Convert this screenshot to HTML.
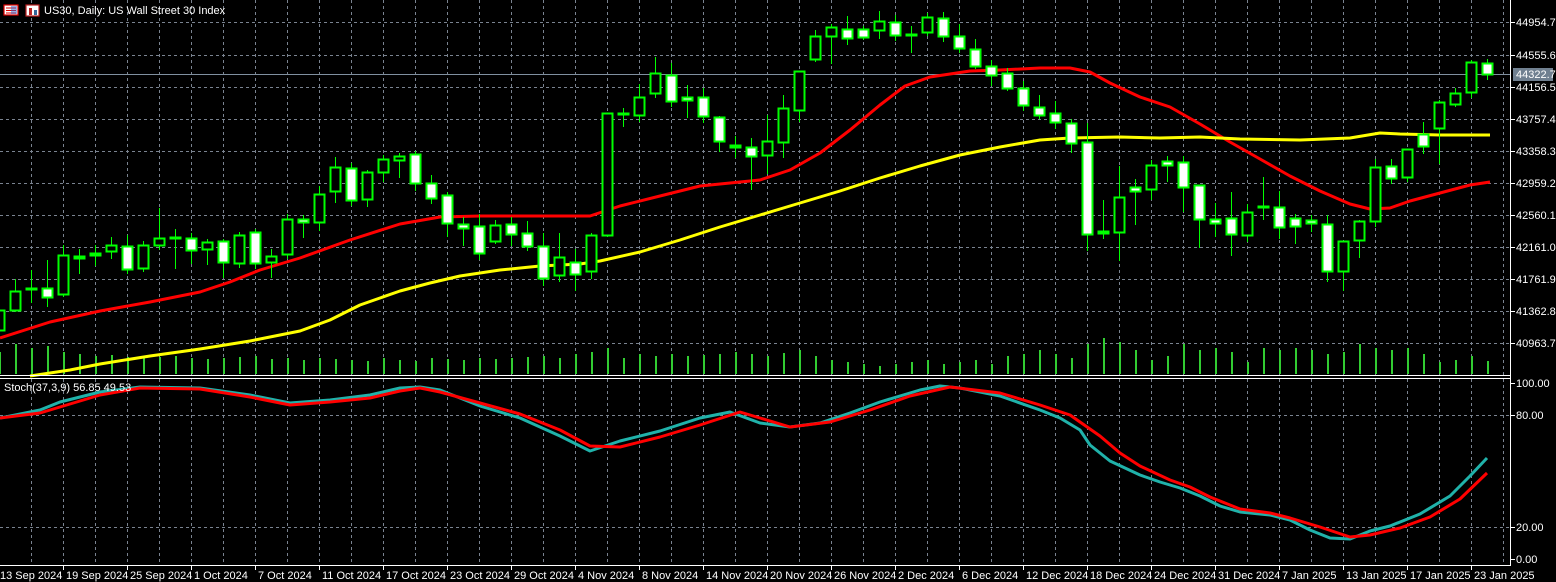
<!DOCTYPE html>
<html><head><meta charset="utf-8"><style>
html,body{margin:0;padding:0;background:#000;width:1556px;height:582px;overflow:hidden}
svg{display:block}
text{font-family:"Liberation Sans",sans-serif;font-size:11px;fill:#fff}
</style></head><body>
<svg id="s" width="1556" height="582" xmlns="http://www.w3.org/2000/svg">
<rect width="1556" height="582" fill="#000"/>
<g id="grid"></g>
<g id="vol"></g>
<g id="ma"></g>
<g id="cd"></g>
<g id="st"></g>
<g id="ax"></g>
<text x="44" y="14">US30, Daily:  US Wall Street 30 Index</text>
<text x="4" y="391">Stoch(37,3,9) 56.85 49.53</text>
<g>
<rect x="4" y="5" width="14" height="10" fill="#fff" stroke="#d00" stroke-width="1.2"/>
<line x1="6" y1="8" x2="16" y2="8" stroke="#d00"/><line x1="6" y1="10.5" x2="16" y2="10.5" stroke="#d00"/><line x1="6" y1="13" x2="16" y2="13" stroke="#d00"/>
<rect x="11" y="6" width="6" height="8" fill="#36c" opacity=".5"/>
<rect x="26" y="5" width="13" height="11" fill="#fff" stroke="#b22" stroke-width="1.2"/>
<rect x="29" y="8" width="3" height="7" fill="#b22"/><rect x="34" y="10" width="3" height="5" fill="#369"/>
</g>
</svg>
<script>
const NS="http://www.w3.org/2000/svg";
function el(p,t,a){const e=document.createElementNS(NS,t);for(const k in a)e.setAttribute(k,a[k]);document.getElementById(p).appendChild(e);return e;}
// grid
const gc="#7a8390";
for(let x=31;x<1510;x+=32){el("grid","line",{x1:x+.5,y1:0,x2:x+.5,y2:375,stroke:gc,"stroke-dasharray":"3,3"});el("grid","line",{x1:x+.5,y1:379,x2:x+.5,y2:565,stroke:gc,"stroke-dasharray":"3,3"});}
const pl=[["44954.7",22],["44555.6",55],["44156.5",87],["43757.4",119],["43358.3",151],["42959.2",183],["42560.1",215],["42161.0",247],["41761.9",279],["41362.8",311],["40963.7",343]];
pl.forEach(p=>{el("grid","line",{x1:0,y1:p[1]+.5,x2:1510,y2:p[1]+.5,stroke:gc,"stroke-dasharray":"3,3"});});
[[415],[527]].forEach(p=>el("grid","line",{x1:0,y1:p[0]+.5,x2:1510,y2:p[0]+.5,stroke:gc,"stroke-dasharray":"3,3"}));
el("grid","line",{x1:0,y1:74.5,x2:1510,y2:74.5,stroke:"#8090a0"});
// candles [top,bottom,high,low,bear]
const C=[[310,330,300,335,0],[291,310,279,311,0],[289,289,270,302,0],[288,297,260,306,1],[255,294,245,296,0],[256,258,249,273,1],[253,255,245,265,1],[245,251,237,258,0],[246,269,235,273,1],[245,268,241,271,0],[238,245,208,249,0],[238,238,229,268,0],[238,250,233,263,1],[242,249,239,264,0],[241,262,239,277,1],[235,263,232,267,0],[232,263,229,268,1],[256,262,249,277,0],[219,254,214,258,0],[219,222,215,237,1],[194,222,186,230,0],[167,191,157,202,0],[168,200,163,205,1],[172,199,170,206,0],[159,172,155,181,0],[156,160,153,177,0],[154,183,151,190,1],[183,198,175,203,1],[195,223,192,236,1],[224,228,217,245,1],[226,253,214,259,1],[225,241,220,243,0],[224,234,217,245,1],[233,246,221,250,1],[246,278,233,285,1],[257,275,233,281,0],[262,274,249,290,1],[235,271,233,278,0],[113,235,113,236,0],[114,114,108,126,0],[97,115,84,121,0],[73,93,57,97,0],[75,101,63,106,1],[97,100,85,117,1],[97,116,88,122,1],[117,141,116,151,1],[145,147,136,157,1],[147,156,138,189,1],[141,155,115,173,0],[108,142,95,157,0],[71,110,71,121,0],[36,59,30,61,0],[27,36,24,63,0],[29,38,16,44,1],[29,37,26,39,1],[21,30,11,38,0],[22,35,15,40,1],[35,35,26,52,0],[17,32,13,35,0],[18,36,12,41,1],[36,48,24,52,1],[49,66,39,68,1],[66,75,60,85,1],[73,88,68,90,1],[88,105,81,110,1],[107,115,95,118,1],[113,122,101,128,1],[123,143,119,152,1],[142,234,123,250,1],[231,233,200,238,1],[197,232,166,260,0],[187,191,179,224,1],[165,189,160,199,0],[161,165,156,181,1],[162,187,156,211,1],[185,219,185,247,1],[219,223,203,236,1],[218,234,192,255,1],[212,235,204,241,0],[207,207,177,219,0],[207,227,191,238,1],[218,226,214,243,1],[220,223,215,231,1],[224,271,215,281,1],[241,271,241,290,0],[221,240,220,257,0],[167,221,159,226,0],[166,178,159,183,1],[149,177,149,181,0],[134,146,122,153,1],[102,128,100,163,0],[93,104,88,106,0],[62,92,60,97,0],[63,74,59,79,1]];
const G="#00ff00";
C.forEach((c,k)=>{const x=16*k-1;
 el("cd","line",{x1:x+.5,y1:c[2],x2:x+.5,y2:c[3]+1,stroke:G});
 if(c[1]-c[0]<2){el("cd","rect",{x:x-5,y:c[0]-1,width:11,height:Math.max(2,c[1]-c[0]+2),fill:c[4]?"#fff":G,stroke:G,"stroke-width":1});}
 else el("cd","rect",{x:x-4.5,y:c[0]+.5,width:10,height:c[1]-c[0],fill:c[4]?"#fff":"#000",stroke:G,"stroke-width":2});
});
// volume
const V=[22,30,26,28,22,20,18,19,17,16,17,18,16,15,16,17,18,15,16,14,16,15,14,13,16,14,13,16,15,14,16,15,16,17,18,16,20,22,26,16,20,18,20,18,19,20,22,20,18,21,24,18,14,12,10,8,10,12,14,10,12,14,10,18,20,24,20,16,30,36,32,24,14,18,30,24,26,22,12,26,24,26,24,20,22,30,26,24,26,20,12,14,18,13];
V.forEach((v,k)=>{const x=16*k-1;el("vol","rect",{x:x,y:374-v,width:2,height:v,fill:"#32cd32"});});
function pth(g,pts,col,w){el(g,"polyline",{points:pts.map(p=>p.join(",")).join(" "),fill:"none",stroke:col,"stroke-width":w,"stroke-linejoin":"round"});}
pth("ma",[[0,338],[50,322],[100,311],[150,302],[200,292],[230,282],[260,270],[300,258],[350,240],[400,224],[440,217],[480,216],[540,216],[590,216],[620,206],[660,196],[700,186],[740,182],[760,180],[790,170],[820,153],[850,130],[880,105],[905,86],[930,77],[970,71],[1000,70],[1040,68],[1070,68],[1090,72],[1110,83],[1140,97],[1170,107],[1200,124],[1230,142],[1260,159],[1290,176],[1320,191],[1350,204],[1370,209],[1390,208],[1410,201],[1440,193],[1470,185],[1490,182]],"#ff0000",3);
pth("ma",[[30,376],[70,370],[100,364],[150,356],[200,349],[250,341],[300,331],[330,320],[360,305],[400,291],[430,283],[460,276],[500,270],[540,266],[580,264],[600,261],[640,252],[680,240],[720,227],[760,215],[800,203],[840,191],[880,178],[920,166],[960,155],[1000,147],[1040,140],[1070,138],[1120,137],[1160,138],[1200,137],[1240,139],[1300,140],[1350,138],[1380,133],[1400,134],[1440,135],[1490,135]],"#ffff00",3);
pth("st",[[0,418],[40,410],[60,402],[100,392],[140,387],[200,388],[250,395],[290,403],[330,400],[370,395],[400,388],[420,387],[440,390],[480,406],[520,418],[560,436],[590,451],[620,441],[660,431],[700,418],[730,412],[760,423],[790,427],[820,423],[850,413],[880,402],[920,390],[940,386],[960,388],[1000,396],[1040,410],[1060,418],[1080,430],[1090,445],[1110,461],[1140,475],[1160,482],[1180,488],[1200,496],[1220,506],[1240,512],[1270,515],[1290,520],[1310,530],[1330,538],[1350,539],[1370,531],[1390,526],[1420,514],[1450,496],[1470,476],[1487,458]],"#20b2aa",3);
pth("st",[[0,418],[40,413],[60,407],[100,395],[140,388],[200,389],[250,397],[290,405],[330,402],[370,398],[400,391],[420,388],[440,392],[480,403],[520,414],[560,430],[590,446],[620,447],[660,437],[700,425],[740,412],[760,418],[790,427],[830,422],[870,410],[910,396],[950,387],[1000,393],[1040,405],[1070,415],[1100,436],[1120,453],[1140,466],[1170,480],[1190,487],[1210,497],[1240,509],[1270,513],[1290,518],[1320,527],[1350,537],[1370,535],[1400,528],[1430,517],[1460,499],[1487,473]],"#ff0000",3);
// axes
el("ax","line",{x1:1510.5,y1:0,x2:1510.5,y2:566,stroke:"#fff"});
el("ax","line",{x1:0,y1:375.5,x2:1511,y2:375.5,stroke:"#fff"});
el("ax","line",{x1:0,y1:378.5,x2:1511,y2:378.5,stroke:"#fff"});
el("ax","line",{x1:0,y1:565.5,x2:1511,y2:565.5,stroke:"#fff"});
pl.forEach(p=>{el("ax","line",{x1:1511,y1:p[1]+.5,x2:1515,y2:p[1]+.5,stroke:"#fff"});const t=el("ax","text",{x:1516,y:p[1]+4});t.textContent=p[0];});
[["100.00",383],["80.00",415],["20.00",527],["0.00",559]].forEach(p=>{el("ax","line",{x1:1511,y1:p[1]+.5,x2:1515,y2:p[1]+.5,stroke:"#fff"});const t=el("ax","text",{x:p[0].length>5?1516:1516,y:p[1]+4});t.textContent=p[0];});
el("ax","rect",{x:1513,y:68,width:40,height:13,fill:"#708090"});
const pt=el("ax","text",{x:1516,y:78,fill:"#fff"});pt.textContent="44322.7";
const D=["13 Sep 2024","19 Sep 2024","25 Sep 2024","1 Oct 2024","7 Oct 2024","11 Oct 2024","17 Oct 2024","23 Oct 2024","29 Oct 2024","4 Nov 2024","8 Nov 2024","14 Nov 2024","20 Nov 2024","26 Nov 2024","2 Dec 2024","6 Dec 2024","12 Dec 2024","18 Dec 2024","24 Dec 2024","31 Dec 2024","7 Jan 2025","13 Jan 2025","17 Jan 2025","23 Jan 2025"];
D.forEach((d,i)=>{const x=i==0?-1:63+64*(i-1);if(i>0)el("ax","line",{x1:x+.5,y1:566,x2:x+.5,y2:570,stroke:"#fff"});const t=el("ax","text",{x:x+(i==0?1:3),y:579});t.textContent=d;});
</script>
</body></html>
